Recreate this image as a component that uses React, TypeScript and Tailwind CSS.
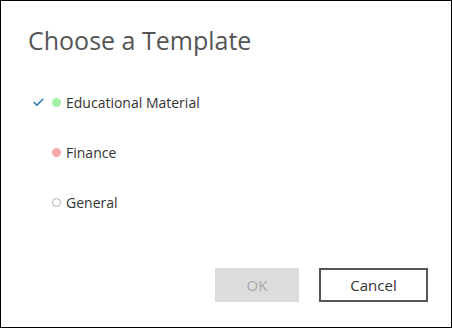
import { Check } from "lucide-react";

const templates = [
  { name: "Educational Material", dot: "bg-[#a6f0a6]", selected: true },
  { name: "Finance", dot: "bg-[#f7a8a8]", selected: false },
  { name: "General", dot: "border border-[#b0b0b0] bg-white", selected: false },
];

export default function App() {
  return (
    <div className="w-[452px] h-[328px] border border-black bg-white flex flex-col font-['Open_Sans',sans-serif]">
      <h1 className="ml-[27px] mt-[22px] text-[25px] leading-[34px] text-[#555]">Choose a Template</h1>

      <div className="mt-[34px] flex flex-col gap-[28px]">
        {templates.map((t) => (
          <div key={t.name} className="flex items-center h-[22px]">
            <span className="w-[44px] pl-[31px] flex items-center">
              {t.selected && <Check size={13} strokeWidth={3} className="text-[#2b78b5] shrink-0" />}
            </span>
            <span className={`ml-[7px] w-[9px] h-[9px] rounded-full shrink-0 box-border ${t.dot}`} />
            <span className="ml-[5px] text-[14px] text-[#333]">{t.name}</span>
          </div>
        ))}
      </div>

      <div className="mt-auto mb-[25px] mr-[23px] flex justify-end gap-[20px]">
        <button className="w-[84px] h-[34px] bg-[#dcdcdc] text-[#a8a8a8] text-[15px]">OK</button>
        <button className="w-[109px] h-[34px] border-2 border-[#555] text-[#333] text-[15px]">Cancel</button>
      </div>
    </div>
  );
}
